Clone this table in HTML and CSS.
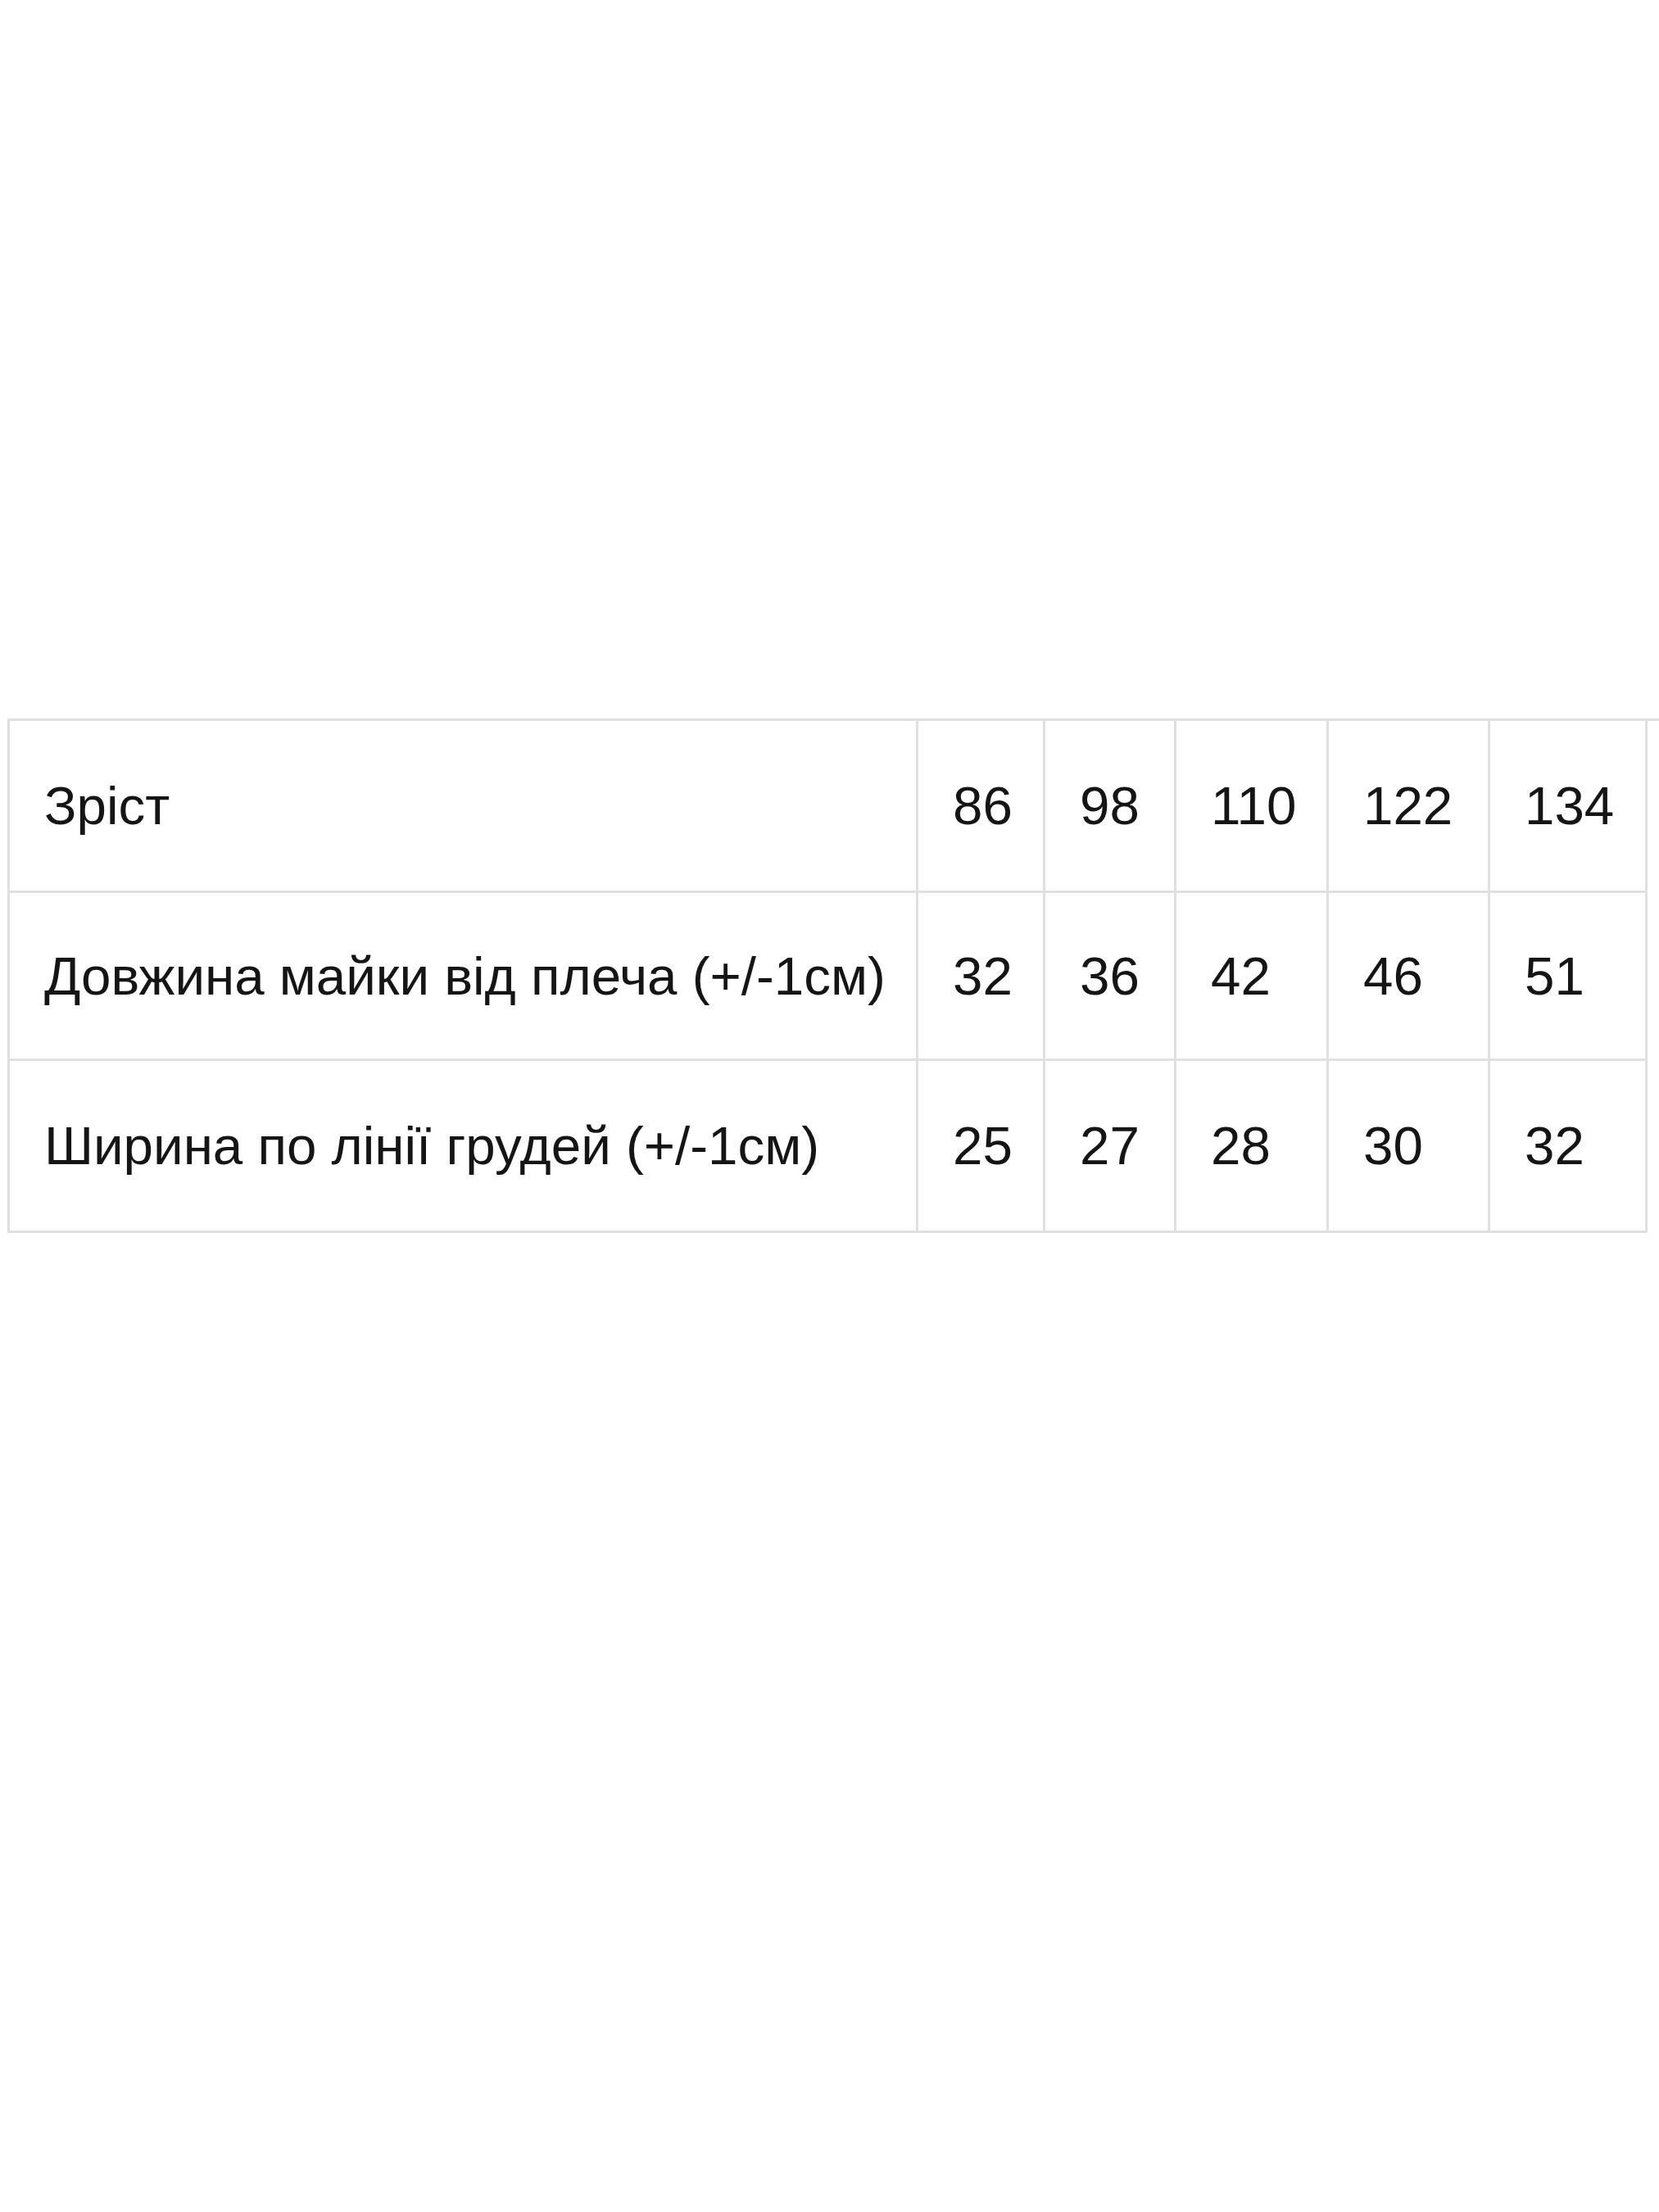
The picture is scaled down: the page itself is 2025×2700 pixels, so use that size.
FILE: index.html
```html
<!DOCTYPE html>
<html lang="uk">
<head>
<meta charset="utf-8">
<title>Розміри</title>
<link rel="stylesheet" href="styles.css">
</head>
<body>
<div class="page">
  <div class="table-wrap">
    <table class="sizes">
      <colgroup>
        <col class="c-label">
        <col class="c-86">
        <col class="c-98">
        <col class="c-110">
        <col class="c-122">
        <col class="c-134">
      </colgroup>
      <tbody>
        <tr class="row-tall">
          <td>Зріст</td>
          <td>86</td>
          <td>98</td>
          <td>110</td>
          <td>122</td>
          <td>134</td>
        </tr>
        <tr>
          <td>Довжина майки від плеча (+/-1см)</td>
          <td>32</td>
          <td>36</td>
          <td>42</td>
          <td>46</td>
          <td>51</td>
        </tr>
        <tr class="row-tall">
          <td>Ширина по лінії грудей (+/-1см)</td>
          <td>25</td>
          <td>27</td>
          <td>28</td>
          <td>30</td>
          <td>32</td>
        </tr>
      </tbody>
    </table>
  </div>
</div>
</body>
</html>
```

FILE: styles.css
```css
html, body {
  margin: 0;
  padding: 0;
  background: #ffffff;
}

.page {
  width: 2025px;
  min-height: 2700px;
  padding-top: 877px;
  box-sizing: border-box;
}

.table-wrap {
  margin-left: 9px;
  border-top: 3px solid #e0e0e0;
}

.sizes {
  border-collapse: collapse;
  table-layout: fixed;
  width: 2001px;
  font-family: "Liberation Sans", Arial, sans-serif;
  font-size: 65.5px;
  color: #151515;
}

.sizes td {
  border: 3px solid #e0e0e0;
  height: 202px;
  padding: 0 0 0 42px;
  vertical-align: middle;
  white-space: nowrap;
  text-align: left;
}

.sizes .row-tall td {
  height: 207px;
}

.sizes tr:first-child td {
  border-top: none;
}

.c-label { width: 1109px; }
.c-86 { width: 155px; }
.c-98 { width: 160px; }
.c-110 { width: 186px; }
.c-122 { width: 197px; }
.c-134 { width: 192px; }
```
